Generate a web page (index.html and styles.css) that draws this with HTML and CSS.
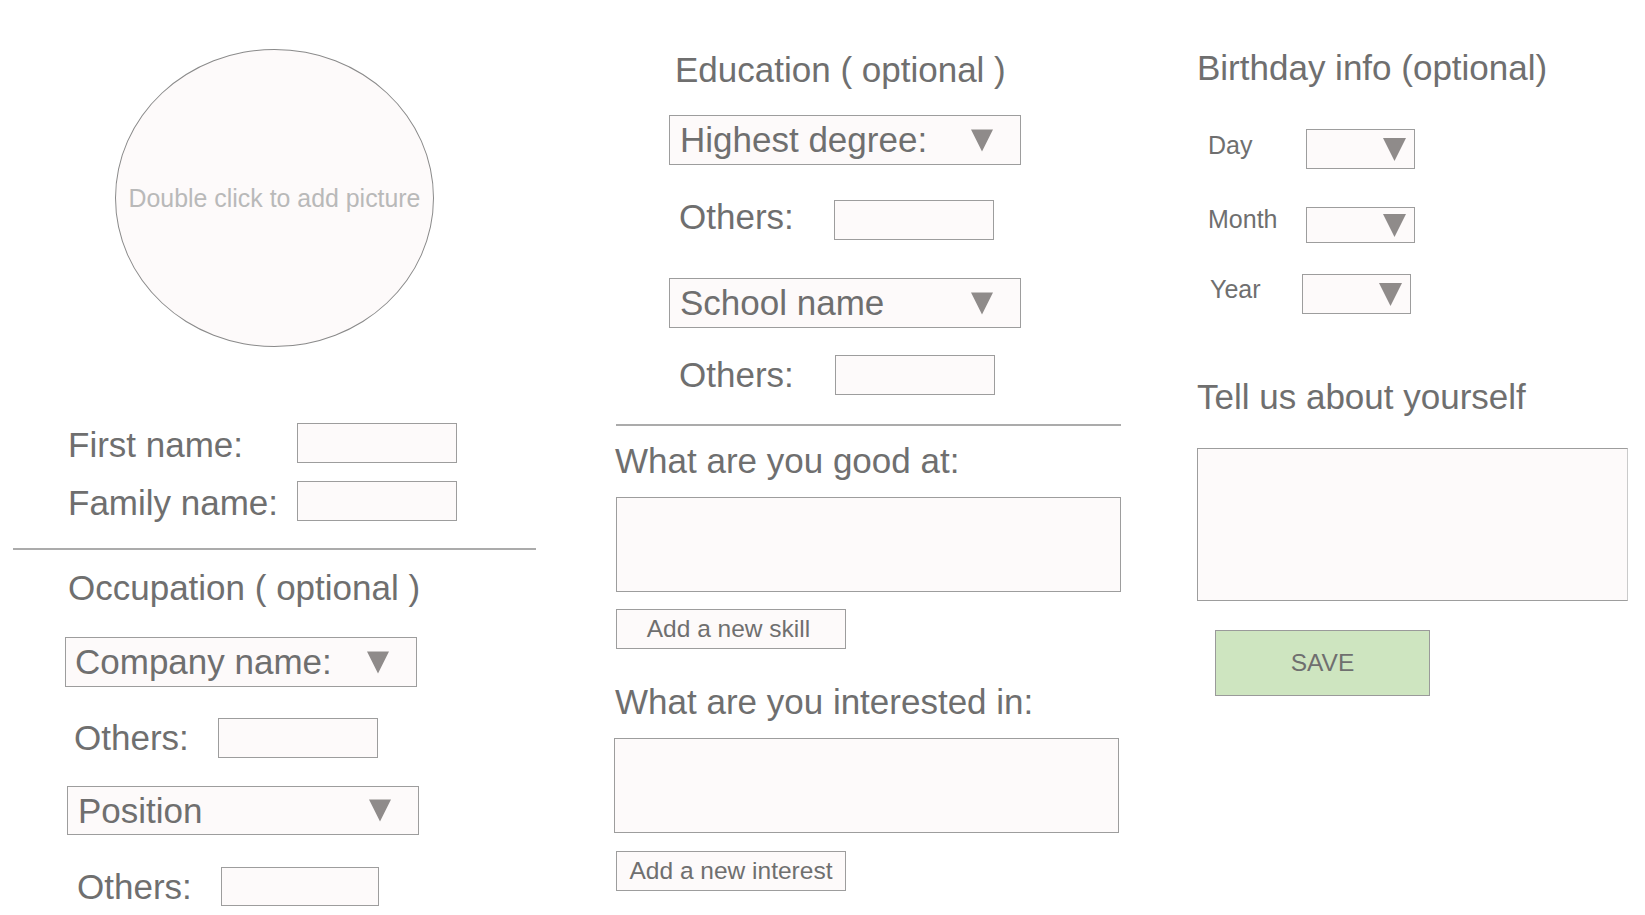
FILE: index.html
```html
<!DOCTYPE html>
<html lang="en">
<head>
<meta charset="utf-8">
<title>Profile form</title>
<link rel="stylesheet" href="styles.css">
</head>
<body>
<main class="page">
  <section class="col col-left">
    <div class="avatar"><span>Double click to add picture</span></div>

    <div class="row row-first">
      <span class="label label-name">First name:</span>
      <div class="box box-name"></div>
    </div>
    <div class="row row-family">
      <span class="label label-name">Family name:</span>
      <div class="box box-name"></div>
    </div>

    <hr class="divider divider-left">

    <h2 class="heading heading-occupation">Occupation ( optional )</h2>

    <div class="select select-company">
      <span>Company name:</span>
      <svg class="caret" viewBox="0 0 23 23"><polygon points="0,0 23,0 11.5,23"/></svg>
    </div>
    <div class="row row-others-a">
      <span class="label label-others">Others:</span>
      <div class="box box-others"></div>
    </div>
    <div class="select select-position">
      <span>Position</span>
      <svg class="caret" viewBox="0 0 23 23"><polygon points="0,0 23,0 11.5,23"/></svg>
    </div>
    <div class="row row-others-b">
      <span class="label label-others">Others:</span>
      <div class="box box-others box-others-narrow"></div>
    </div>
  </section>

  <section class="col col-mid">
    <h2 class="heading heading-edu">Education ( optional )</h2>
    <div class="select select-degree">
      <span>Highest degree:</span>
      <svg class="caret" viewBox="0 0 23 23"><polygon points="0,0 23,0 11.5,23"/></svg>
    </div>
    <div class="row row-others-c">
      <span class="label label-others-wide">Others:</span>
      <div class="box box-others"></div>
    </div>
    <div class="select select-school">
      <span>School name</span>
      <svg class="caret" viewBox="0 0 23 23"><polygon points="0,0 23,0 11.5,23"/></svg>
    </div>
    <div class="row row-others-d">
      <span class="label label-others-wide">Others:</span>
      <div class="box box-others"></div>
    </div>

    <hr class="divider divider-mid">

    <h2 class="heading heading-good">What are you good at:</h2>
    <div class="area area-skill"></div>
    <div class="btn btn-add btn-add-skill">Add a new skill</div>

    <h2 class="heading heading-interest">What are you interested in:</h2>
    <div class="area area-interest"></div>
    <div class="btn btn-add btn-add-interest">Add a new interest</div>
  </section>

  <section class="col col-right">
    <h2 class="heading heading-bday">Birthday info (optional)</h2>

    <div class="bday-row bday-day">
      <span class="bday-label">Day</span>
      <div class="mini-select"><svg class="caret caret-mini" viewBox="0 0 23 23"><polygon points="0,0 23,0 11.5,23"/></svg></div>
    </div>
    <div class="bday-row bday-month">
      <span class="bday-label">Month</span>
      <div class="mini-select mini-select-short"><svg class="caret caret-mini" viewBox="0 0 23 23"><polygon points="0,0 23,0 11.5,23"/></svg></div>
    </div>
    <div class="bday-row bday-year">
      <span class="bday-label">Year</span>
      <div class="mini-select"><svg class="caret caret-mini" viewBox="0 0 23 23"><polygon points="0,0 23,0 11.5,23"/></svg></div>
    </div>

    <h2 class="heading heading-about">Tell us about yourself</h2>
    <div class="area area-about"></div>
    <div class="btn btn-save">SAVE</div>
  </section>
</main>
</body>
</html>
```

FILE: styles.css
```css
* {
  box-sizing: border-box;
}

html, body {
  margin: 0;
  padding: 0;
  background: #ffffff;
}

body {
  width: 1645px;
  height: 915px;
  overflow: hidden;
  font-family: "Liberation Sans", Arial, Helvetica, sans-serif;
  color: #6f6f6f;
}

.page {
  display: flex;
  align-items: flex-start;
  height: 915px;
}

.col {
  display: flex;
  flex-direction: column;
  align-items: flex-start;
}

.col-left {
  width: 523px;
  margin-left: 13px;
}

.col-mid {
  width: 505px;
  margin-left: 80px;
}

.col-right {
  width: 431px;
  margin-left: 76px;
}

/* ---------- generic pieces ---------- */

.heading {
  margin: 0;
  font-size: 35px;
  font-weight: normal;
  line-height: 40px;
  height: 40px;
  white-space: nowrap;
  color: #6f6f6f;
}

.row {
  display: flex;
  align-items: center;
  height: 40px;
}

.label {
  font-size: 35px;
  line-height: 40px;
  white-space: nowrap;
  flex: none;
}

.box,
.area,
.select,
.mini-select,
.btn {
  background: #fdfafa;
  border: 1px solid #9d9d9d;
}

.box {
  height: 40px;
  flex: none;
}

.divider {
  border: 0;
  height: 2px;
  background: #ababab;
  margin: 0;
}

.select {
  display: flex;
  align-items: center;
  justify-content: space-between;
  width: 352px;
  height: 50px;
  padding: 0 27px 0 9px;
  font-size: 35px;
  line-height: 40px;
  white-space: nowrap;
}

.caret {
  width: 22px;
  height: 23px;
  flex: none;
  fill: #8f8b8a;
}

.area {
  height: 95px;
  width: 505px;
}

.btn {
  display: flex;
  align-items: center;
  justify-content: center;
  font-size: 24.5px;
  white-space: nowrap;
}

/* ---------- left column ---------- */

.avatar {
  margin: 49px 0 0 102px;
  width: 319px;
  height: 298px;
  border: 1px solid #8a8a8a;
  border-radius: 50%;
  background: #fdfafa;
  display: flex;
  align-items: center;
  justify-content: center;
  font-size: 24.9px;
  color: #b9b9b9;
  white-space: nowrap;
}

.row-first {
  margin: 76px 0 0 55px;
}

.row-family {
  margin: 18px 0 0 55px;
}

.label-name {
  width: 229px;
  margin-top: 4px;
}

.box-name {
  width: 160px;
}

.divider-left {
  width: 523px;
  margin-top: 27px;
}

.heading-occupation {
  margin: 18px 0 0 55px;
}

.select-company {
  margin: 29px 0 0 52px;
}

.row-others-a {
  margin: 31px 0 0 61px;
}

.label-others {
  width: 144px;
}

.box-others {
  width: 160px;
}

.box-others-narrow {
  width: 158px;
}

.select-position {
  margin: 28px 0 0 54px;
  padding-left: 10px;
  height: 49px;
}

.row-others-b {
  margin: 32px 0 0 64px;
  height: 39px;
}

.row-others-b .box {
  height: 39px;
}

/* ---------- middle column ---------- */

.heading-edu {
  margin: 50px 0 0 59px;
}

.select-degree {
  margin: 25px 0 0 53px;
  padding-left: 10px;
}

.row-others-c {
  margin: 35px 0 0 63px;
}

.row-others-c .label-others-wide {
  margin-bottom: 7px;
}

.label-others-wide {
  width: 155px;
}

.select-school {
  margin: 38px 0 0 53px;
  padding-left: 10px;
}

.row-others-d {
  margin: 27px 0 0 63px;
}

.row-others-d .label-others-wide {
  width: 156px;
}

.divider-mid {
  width: 505px;
  margin-top: 29px;
}

.heading-good {
  margin: 15px 0 0 -1px;
}

.area-skill {
  margin-top: 16px;
}

.btn-add {
  width: 230px;
  height: 40px;
}

.btn-add-skill {
  margin-top: 17px;
  padding-right: 5px;
}

.heading-interest {
  margin: 33px 0 0 -1px;
}

.area-interest {
  margin: 16px 0 0 -2px;
}

.btn-add-interest {
  margin-top: 18px;
}

/* ---------- right column ---------- */

.heading-bday {
  margin: 48px 0 0 0;
}

.bday-row {
  display: flex;
  align-items: flex-start;
  margin-left: 11px;
}

.bday-label {
  width: 98px;
  font-size: 25px;
  line-height: 28px;
  white-space: nowrap;
  flex: none;
}

.bday-day {
  margin-top: 41px;
}

.bday-day .bday-label {
  margin-top: 2px;
}

.bday-month {
  margin-top: 38px;
}

.bday-month .bday-label {
  margin-top: -2px;
}

.bday-year {
  margin-top: 31px;
  margin-left: 13px;
}

.bday-year .bday-label {
  width: 92px;
  margin-top: 1px;
}

.mini-select {
  width: 109px;
  height: 40px;
  display: flex;
  align-items: center;
  justify-content: flex-end;
  padding-right: 8px;
}

.mini-select-short {
  height: 36px;
}

.caret-mini {
  width: 23px;
  height: 23px;
}

.heading-about {
  margin: 63px 0 0 0;
}

.area-about {
  margin-top: 31px;
  width: 431px;
  height: 153px;
  border-right-color: #cacaca;
}

.btn-save {
  margin: 29px 0 0 18px;
  width: 215px;
  height: 66px;
  background: #cee5c0;
  border-color: #9a9a9a;
  font-size: 24.5px;
}
```
